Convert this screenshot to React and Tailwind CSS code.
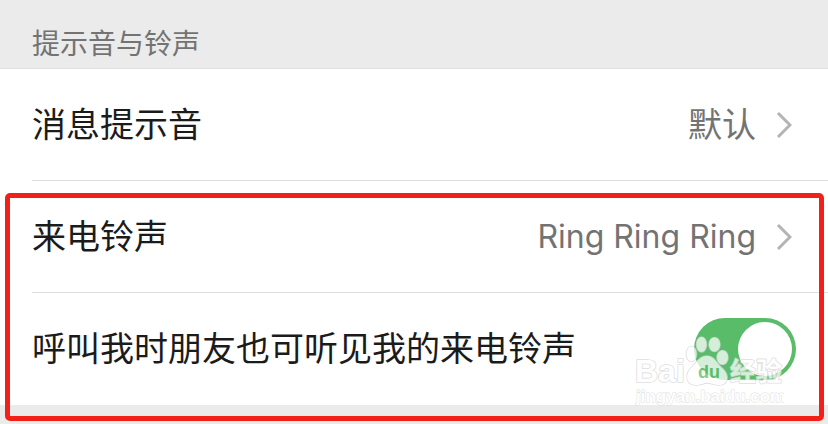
import React, { useState } from 'react';

const Chevron = () => (
  <svg className="w-4 h-7 shrink-0" viewBox="0 0 16 28" fill="none" aria-hidden="true">
    <path d="M2 2L14 14L2 26" stroke="#b4b4b4" strokeWidth="3" />
  </svg>
);

const LinkRow = ({ label, children }) => (
  <a href="#" className="flex items-center justify-between h-28 ml-8 pr-9 border-b border-[#dedede]">
    <span className="text-[34px] leading-10 text-[#1b1b1b]">{label}</span>
    <span className="flex items-center gap-5 text-[#737373]">
      {children}
      <Chevron />
    </span>
  </a>
);

const ToggleRow = ({ label, checked, onChange }) => (
  <label className="flex items-center justify-between h-28 pl-8 pr-8">
    <span className="text-[34px] leading-10 text-[#1b1b1b]">{label}</span>
    <input
      type="checkbox"
      role="switch"
      checked={checked}
      onChange={(e) => onChange(e.target.checked)}
      className="appearance-none flex items-center w-[102px] h-[62px] p-1 shrink-0 rounded-full bg-gray-300 checked:bg-[#59bc69] checked:justify-end before:block before:size-[54px] before:rounded-full before:bg-white"
    />
  </label>
);

const Watermark = () => (
  <svg
    className="absolute right-11 -bottom-1 w-[150px] h-[76px] opacity-75 pointer-events-none"
    viewBox="0 0 150 76"
    fill="#ffffff"
    stroke="#d4d4d4"
    strokeWidth="1.6"
    paintOrder="stroke"
    strokeLinejoin="round"
    fontFamily="'Liberation Sans', 'Noto Sans CJK SC', sans-serif"
    aria-hidden="true"
  >
    <text x="1" y="49" fontSize="32" fontWeight="700">Bai</text>
    <ellipse cx="57.5" cy="21" rx="5" ry="7.5" />
    <ellipse cx="67.5" cy="11.5" rx="5" ry="7.5" />
    <ellipse cx="80.5" cy="11.5" rx="5.5" ry="7" />
    <ellipse cx="88.5" cy="24.5" rx="5.5" ry="7" />
    <path d="M73 23C66 23 63 29 58 34C51 40 51 52 62 52C67 52 69 50 73 50C78 50 80 52 85 52C95 52 95 42 89 36C82 30 80 23 73 23Z" />
    <text x="64" y="45" fontSize="18" fontWeight="700" fill="#59bc69" stroke="none">du</text>
    <text x="96" y="48" fontSize="26" fontWeight="700">经验</text>
    <text x="2" y="69" fontSize="17" fontWeight="700" strokeWidth="1">jingyan.baidu.com</text>
  </svg>
);

const App = () => {
  const [shareRingtone, setShareRingtone] = useState(true);

  return (
    <main className="min-h-screen bg-[#ebebeb] font-[Inter,'Noto_Sans_CJK_SC',sans-serif]">
      <h2 className="pt-6 pb-1 pl-8 text-[28px] leading-10 text-[#737373] border-b border-[#e0e0e0]">
        提示音与铃声
      </h2>
      <section className="bg-white">
        <LinkRow label="消息提示音">
          <span className="text-[34px] leading-10">默认</span>
        </LinkRow>
        <div className="relative">
          <LinkRow label="来电铃声">
            <span className="text-[32px] leading-10">Ring Ring Ring</span>
          </LinkRow>
          <ToggleRow
            label="呼叫我时朋友也可听见我的来电铃声"
            checked={shareRingtone}
            onChange={setShareRingtone}
          />
          <Watermark />
          <div className="absolute top-3 -bottom-4 left-[5px] right-1 border-5 border-[#f22018] rounded-[5px] pointer-events-none" />
        </div>
      </section>
    </main>
  );
};

export default App;
